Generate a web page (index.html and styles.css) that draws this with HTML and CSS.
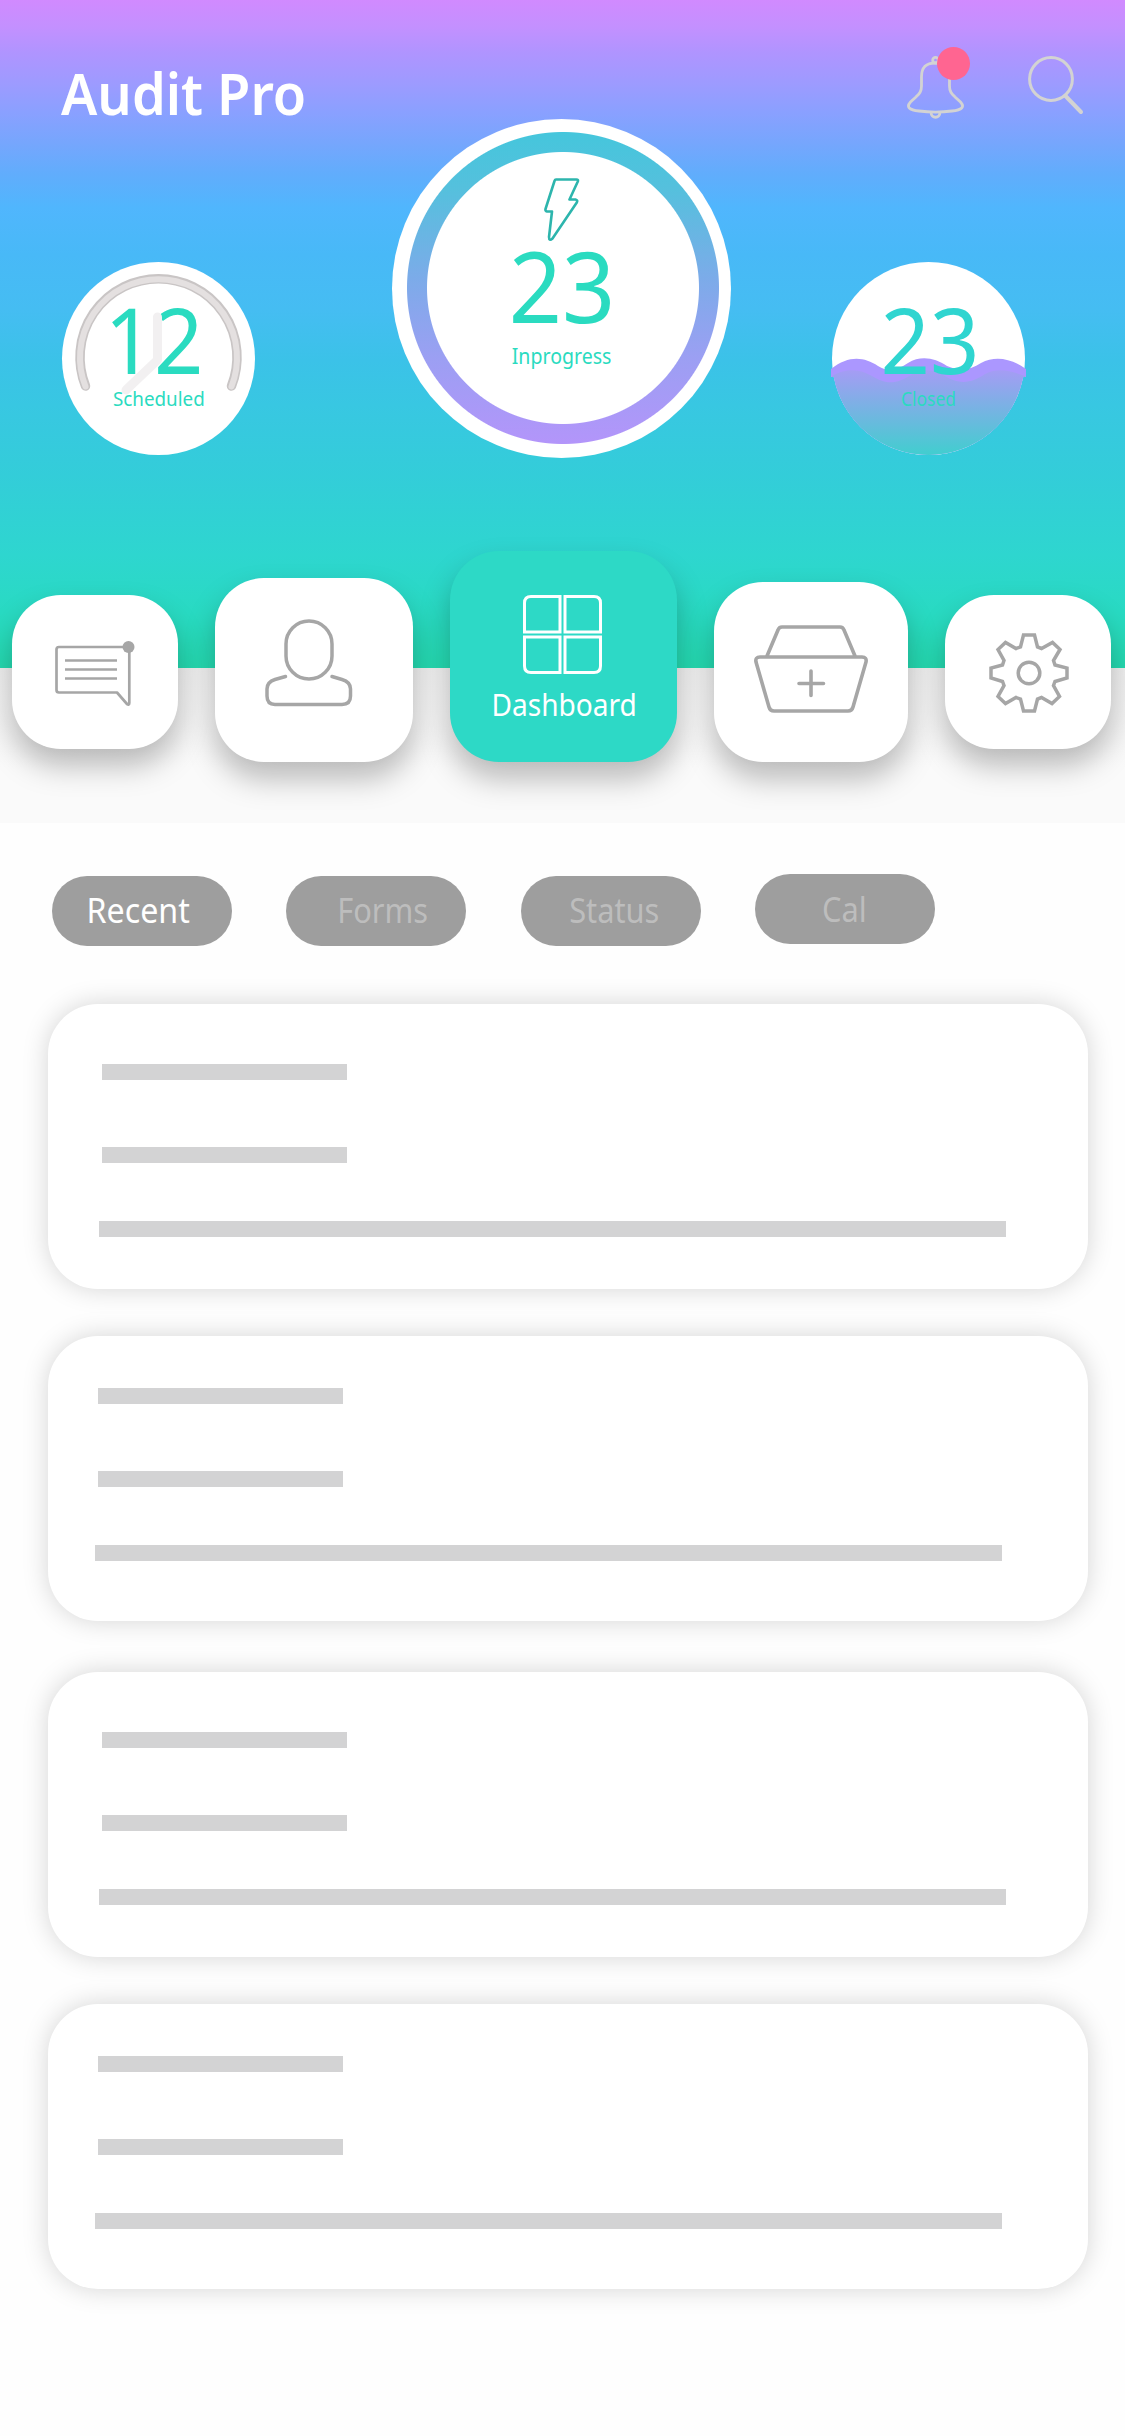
FILE: index.html
```html
<!DOCTYPE html>
<html lang="en">
<head>
<meta charset="utf-8">
<title>Audit Pro</title>
<link rel="stylesheet" href="styles.css">
</head>
<body>
<main class="app">
  <section class="hero">
    <header class="topbar">
      <h1 class="brand"><span>Audit Pro</span></h1>
      <div class="actions">
        <button class="bell" aria-label="Notifications">
          <svg width="58" height="64" viewBox="0 0 58 64">
            <g fill="none" stroke="#d3d3d3" stroke-width="2.800">
              <circle cx="28.500" cy="4.200" r="2.800"/>
              <path d="M28.500 7C17 7 14.500 13 14.500 21V30C14.500 36 12 38 9 41L3.500 46C-1 51 2 54 12 55C22 56.300 35 56.300 45 55C55 54 58 51 53.500 46L48 41C45 38 42.500 36 42.500 30V21C42.500 13 40 7 28.500 7Z"/>
              <path d="M24 56C24 63 33 63 33 56"/>
            </g>
          </svg>
          <i class="dot"></i>
        </button>
        <button class="search" aria-label="Search">
          <svg width="56" height="60" viewBox="0 0 56 60">
            <g fill="none" stroke="#d3d3d3"><circle cx="23" cy="23" r="21.400" stroke-width="3"/><path d="M37.500 40L53 56" stroke-width="4" stroke-linecap="round"/></g>
          </svg>
        </button>
      </div>
    </header>
    <div class="stats">
      <article class="stat small scheduled">
        <b>12</b><span>Scheduled</span>
        <svg class="over" width="193" height="193" viewBox="0 0 193 193">
          <g fill="none" stroke-linecap="round" stroke-linejoin="round">
            <path d="M23.500 124A78.500 78.500 0 1 1 169.500 124" stroke="#c9c5c5" stroke-width="9.500"/>
            <path d="M23.500 124.500A78.500 78.500 0 1 1 169.500 124.500" stroke="#e4e0e0" stroke-width="6"/>
            <path d="M95.500 55V98L64 128" stroke="#f2f0f1" stroke-width="9"/>
          </g>
        </svg>
      </article>
      <article class="stat large">
        <svg class="bolt" width="36" height="64" viewBox="0 0 36 64" fill="none" stroke="#2db5ad" stroke-width="2.600" stroke-linejoin="round"><path d="M12 1.500H32.500Q34.500 1.500 33.800 3.500L25.500 21.500H31.500Q34 22 32.800 24.500L8.500 60.500Q5 63.500 5 59L8 33.500H3Q1 33 1.500 31L10.500 3Q11 1.500 12 1.500Z"/></svg>
        <b>23</b><span>Inprogress</span>
      </article>
      <article class="stat small closed">
        <svg class="wave" width="195" height="193" viewBox="0 0 195 193">
          <defs><linearGradient id="sea" x1="0" y1="0" x2="0" y2="1"><stop offset="0" stop-color="#a59cf4"/><stop offset="1" stop-color="#41cecf"/></linearGradient>
          <clipPath id="disc"><circle cx="97.500" cy="96.500" r="96.500"/><path d="M0 96H195V115H0Z"/></clipPath></defs>
          <g clip-path="url(#disc)">
            <path d="M0 107C18 93 33 95 47 104C58 111 67 108 77 101C90 93 104 96 116 104C130 110 139 108 150 101C165 93 181 97 195 107V114L193 193H2L0 114Z" fill="#ab97ff"/>
            <path d="M1 114C18 105 30 108 41 114C57 124 67 121 80 113C92 106 103 107 114 114C130 124 142 120 154 112C168 105 180 109 194 114V193H1Z" fill="url(#sea)"/>
          </g>
        </svg>
        <b>23</b><span>Closed</span>
      </article>
    </div>
  </section>
  <nav class="dock">
    <a class="tile edge"><svg width="80" height="66" viewBox="0 0 80 66"><g fill="none" stroke="#a6a6a6" stroke-width="2.700" stroke-linejoin="round"><path d="M74.300 6H4Q1.500 6 1.500 8.500V49Q1.500 51.500 4 51.500H62L72 63Q74.300 64.500 74.300 62Z"/><path d="M10 19.500H62M10 28.500H62M10 37.500H62"/></g><circle cx="73.500" cy="6" r="6" fill="#a6a6a6"/></svg></a>
    <a class="tile person"><svg width="88" height="88" viewBox="0 0 88 88" fill="none" stroke="#a6a6a6" stroke-width="3.500" stroke-linecap="round"><rect x="21" y="2" width="46" height="58" rx="23"/><path d="M20.500 57.500L10 60.500Q2 63 2 70V77Q2 85.500 10 85.500H77Q85.500 85.500 85.500 77V70Q85.500 63 77 60.500L67 57.500"/></svg></a>
    <a class="tile active"><svg width="79" height="79" viewBox="0 0 79 79" fill="none" stroke="#fff" stroke-width="3"><path d="M37 1.500V37H1.500V8Q1.500 1.500 8 1.500ZM42 1.500V37H77.500V8Q77.500 1.500 71 1.500ZM37 77.500V42H1.500V71Q1.500 77.500 8 77.500ZM42 77.500V42H77.500V71Q77.500 77.500 71 77.500Z"/></svg><span>Dashboard</span></a>
    <a class="tile basket"><svg width="114" height="88" viewBox="0 0 114 88" fill="none" stroke="#a6a6a6" stroke-width="3.600" stroke-linecap="round" stroke-linejoin="round"><path d="M13 31L24 5Q25 2 28 2H86Q89 2 90 5L101 31M6 32H108Q113 32 112 37L99 82Q98 86 94 86H20Q16 86 15 82L2 37Q1 32 6 32ZM57 46V70.500M45 58.500H69.500"/></svg></a>
    <a class="tile edge gear"><svg width="80" height="80" viewBox="0 0 80 80" fill="none" stroke="#a6a6a6" stroke-width="3.500"><path d="M34.500 2H45.500L48.500 14L52.500 15.500L63.500 9.500L71 16.500L64.500 27.500L66 32L78 35V45L66 48.500L64.500 52.500L70.500 63.500L63 70.500L52.500 64.500L48.500 66L45.500 78H34.500L31.500 66L27 64.500L16.500 70.500L9 63.500L15 52.500L13.500 48.500L2 45V35L13.500 32L15 27.500L9 16.500L16.500 9.500L27 15.500L31.500 14Z"/><circle cx="40" cy="40" r="10.800"/></svg></a>
  </nav>
  <div class="filters">
    <button class="pill on"><span>Recent</span></button>
    <button class="pill forms"><span>Forms</span></button>
    <button class="pill status"><span>Status</span></button>
    <button class="pill cal"><span>Cal</span></button>
  </div>
  <section class="list">
    <article class="card"><i></i><i></i><i class="wide"></i></article>
    <article class="card alt"><i></i><i></i><i class="wide"></i></article>
    <article class="card"><i></i><i></i><i class="wide"></i></article>
    <article class="card alt"><i></i><i></i><i class="wide"></i></article>
  </section>
</main>
</body>
</html>
```
FILE: styles.css
```css
* { box-sizing: border-box; }
body { margin: 0; background: #fff; font-family: "Noto Sans", "Open Sans", sans-serif; }
button { border: 0; padding: 0; background: none; font: inherit; }
svg { display: block; }
.app { width: 1125px; height: 2436px; overflow: hidden; background: #fefefe; }

.hero {
  height: 668px;
  background: linear-gradient(#d18aff 0, #c490ff 26px, #b094ff 52px, #9c9bff 85px, #8aa0ff 112px, #76a6fd 143px, #60adfc 175px, #50b6fd 208px, #48b9f7 255px, #45bdf2 310px, #3bc2e8 360px, #38c7e2 405px, #33cdd9 475px, #2ed6cf 555px, #29dac3 610px, #25dab0 668px);
}
.topbar { height: 119px; padding: 46px 41px 0 61px; display: flex; justify-content: space-between; }
.brand { margin: 0; font-size: 58px; line-height: 94px; font-weight: 600; color: #fff; }
.brand span { display: inline-block; transform-origin: 0 50%; transform: scaleX(.933); }
.actions { display: flex; gap: 63px; }
.bell { position: relative; width: 58px; height: 64px; margin-top: 10px; }
.dot { position: absolute; left: 30px; top: -9px; width: 33px; height: 33px; border-radius: 50%; background: #ff6591; }
.search { width: 56px; height: 60px; margin-top: 10px; }

.stats { display: flex; align-items: flex-start; padding-left: 62px; }
.stat { position: relative; display: flex; flex-direction: column; align-items: center; border-radius: 50%; color: #2adbc0; }
.stat b { font-weight: 400; transform: scaleX(.95); }
.small { width: 193px; height: 193px; margin-top: 143px; background: #fff; padding-top: 21px; }
.small b { font-size: 91px; line-height: 112px; height: 104px; }
.small span { font-size: 20px; line-height: 24px; transform: scaleX(.94); }
.scheduled b { margin-left: -8px; }
.over, .wave { position: absolute; left: 0; top: 0; }
.wave { left: -1px; }
.closed b, .closed span { position: relative; }
.closed b { margin-left: 3px; color: #2fd5d0; }
.closed span { transform: scaleX(.87); }
.large {
  width: 339px; height: 339px; margin: 0 101px 0 137px; padding-top: 59px;
  background: radial-gradient(circle at 171px 169px, #fff 135.500px, transparent 136.500px), radial-gradient(circle at 171px 169px, transparent 155.500px, #fff 156.500px), linear-gradient(#45c6dc 13px, #55c0dd 70px, #7cabe9 160px, #9c9ff3 240px, #b395fa 325px);
}
.large b { font-size: 98px; line-height: 86px; height: 100px; margin-left: 2px; }
.large span { font-size: 21px; line-height: 28px; transform: scaleX(.93); }

.dock {
  height: 155px; margin-bottom: 51px; padding: 0 12px; display: flex; gap: 37px; align-items: flex-start;
  background: linear-gradient(#f0f0f0, #fafafa 100px);
}
.tile { flex: none; display: flex; flex-direction: column; align-items: center; background: #fff; border-radius: 49px; box-shadow: 0 17px 30px rgba(0,0,0,.26); }
.edge { width: 166px; height: 154px; margin-top: -73px; padding-top: 46px; }
.gear { padding-top: 38px; padding-left: 2px; }
.person { width: 198px; height: 184px; margin-top: -90px; padding-top: 41px; padding-right: 10px; }
.active { width: 227px; height: 211px; margin-top: -117px; padding: 44px 2px 0 0; background: #2dd9c6; color: #fff; }
.active span { font-size: 31px; line-height: 40px; margin: 10px 0 0 3px; transform: scaleX(.905); }
.basket { width: 194px; height: 180px; margin-top: -86px; padding-top: 43px; }

.filters { display: flex; padding-left: 52px; gap: 54px; height: 130px; }
.pill { width: 180px; height: 70px; margin-top: 2px; border-radius: 35px; background: #9e9e9e; color: #bdbdbd; font-size: 35px; line-height: 68px; padding-bottom: 2px; }
.pill span { display: inline-block; transform: scaleX(.88); }
.on { color: #fff; padding-right: 8px; }
.pill.on span { transform: scaleX(.92); }
.forms { padding-left: 13px; }
.status { padding-left: 6px; margin-left: 1px; }
.cal { margin-top: 0; padding: 0 2px 0 0; }

.list { padding: 0 37px 0 48px; }
.card { height: 285px; margin-bottom: 47px; padding: 60px 51px 0 54px; border-radius: 50px; background: #fff; box-shadow: 0 0 26px rgba(0,0,0,.17); }
.card i { display: block; width: 245px; height: 16px; margin-bottom: 67px; background: #d3d3d4; }
.card .wide { width: 907px; margin: -9px 0 0 -3px; }
.alt { padding: 52px 0 0 50px; margin-bottom: 51px; }
```
